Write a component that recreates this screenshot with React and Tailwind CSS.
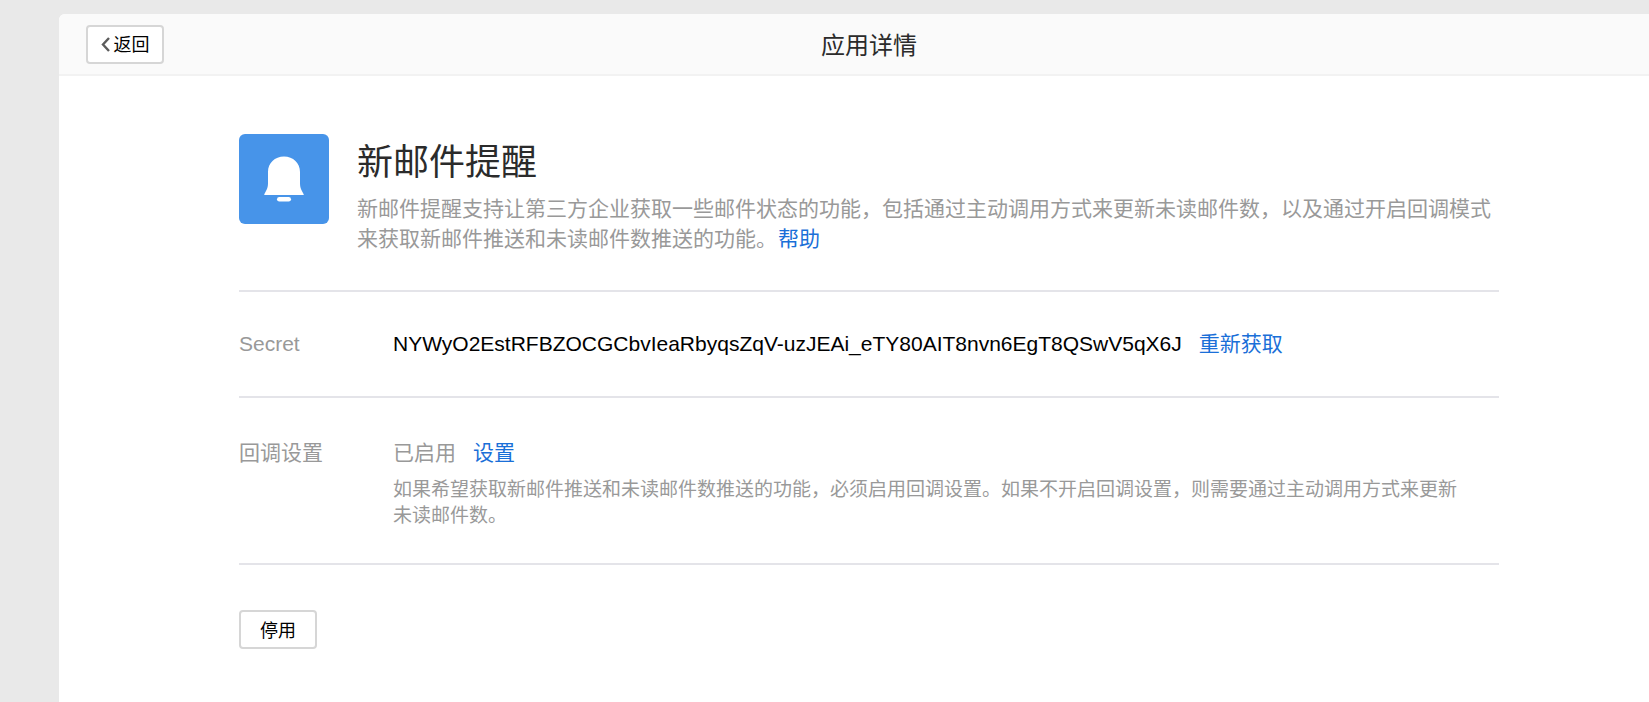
function BackIcon() {
  return (
    <svg className="h-4 w-[9px] shrink-0" viewBox="0 0 9 16" fill="none" aria-hidden="true">
      <path d="M8 1 2 7.500l6 6.500" stroke="#5c5c5c" strokeWidth="2.4" />
    </svg>
  );
}

function BellTile() {
  return (
    <svg className="size-[90px] shrink-0" viewBox="0 0 90 90" role="img" aria-label="新邮件提醒">
      <rect width="90" height="90" rx="6" fill="#4794e9" />
      <path
        d="M45 22.500C35.800 22.500 29 29 29 38v11c0 4.500-1 6.500-3.700 11.200V61h39.400v-.8C62 55.500 61 53.500 61 49V38c0-9-6.800-15.500-16-15.500Z"
        fill="#fff"
      />
      <rect x="38" y="63" width="14" height="4.600" rx="2.300" fill="#fff" />
    </svg>
  );
}

function TextLink({ children }) {
  return (
    <a href="#" className="ml-px whitespace-nowrap text-[#1a6fd8]">
      {children}
    </a>
  );
}

const buttonClass =
  "flex h-[39px] w-[78px] items-center justify-center gap-1 rounded border-2 border-[#d6d6d6] bg-white pt-0.5 text-lg text-black";

export default function App() {
  return (
    <div className="min-h-screen overflow-hidden bg-[#e9e9e9] pt-3.5 font-['Liberation_Sans','Noto_Sans_CJK_SC',sans-serif] text-[#999]">
      <div className="-mr-[30px] ml-[59px] flex min-h-[calc(100vh-14px)] flex-col overflow-hidden rounded-tl-md bg-white">
        <header className="grid h-[62px] grid-cols-[1fr_auto_1fr] items-center border-b-2 border-[#f2f2f2] bg-[#fafafa] px-[27px]">
          <button type="button" className={buttonClass}>
            <BackIcon />
            返回
          </button>
          <h1 className="pt-1 text-2xl font-normal text-[#2b2b2b]">应用详情</h1>
        </header>

        <main className="px-[180px] pt-[58px] text-[21px] leading-[30px]">
          <section className="flex gap-7 border-b-2 border-[#e4e4e9] pb-9">
            <BellTile />
            <div>
              <h2 className="pt-0.5 text-4xl leading-[54px] font-normal text-[#2b2b2b]">新邮件提醒</h2>
              <p className="mt-1">
                新邮件提醒支持让第三方企业获取一些邮件状态的功能，包括通过主动调用方式来更新未读邮件数，以及通过开启回调模式来获取新邮件推送和未读邮件数推送的功能。
                <TextLink>帮助</TextLink>
              </p>
            </div>
          </section>

          <section className="flex border-b-2 border-[#e4e4e9] py-9 leading-8">
            <h3 className="w-[154px] shrink-0 font-normal">Secret</h3>
            <div className="flex gap-4">
              <span className="text-black">NYWyO2EstRFBZOCGCbvIeaRbyqsZqV-uzJEAi_eTY80AIT8nvn6EgT8QSwV5qX6J</span>
              <TextLink>重新获取</TextLink>
            </div>
          </section>

          <section className="flex border-b-2 border-[#e4e4e9] pt-[37px] pb-[34px]">
            <h3 className="w-[154px] shrink-0 leading-9 font-normal">回调设置</h3>
            <div className="pr-7">
              <div className="flex gap-4 leading-9">
                <span>已启用</span>
                <TextLink>设置</TextLink>
              </div>
              <p className="mt-1.5 text-[19px] leading-[26px]">
                如果希望获取新邮件推送和未读邮件数推送的功能，必须启用回调设置。如果不开启回调设置，则需要通过主动调用方式来更新未读邮件数。
              </p>
            </div>
          </section>

          <div className="py-[45px]">
            <button type="button" className={buttonClass}>
              停用
            </button>
          </div>
        </main>
      </div>
    </div>
  );
}
